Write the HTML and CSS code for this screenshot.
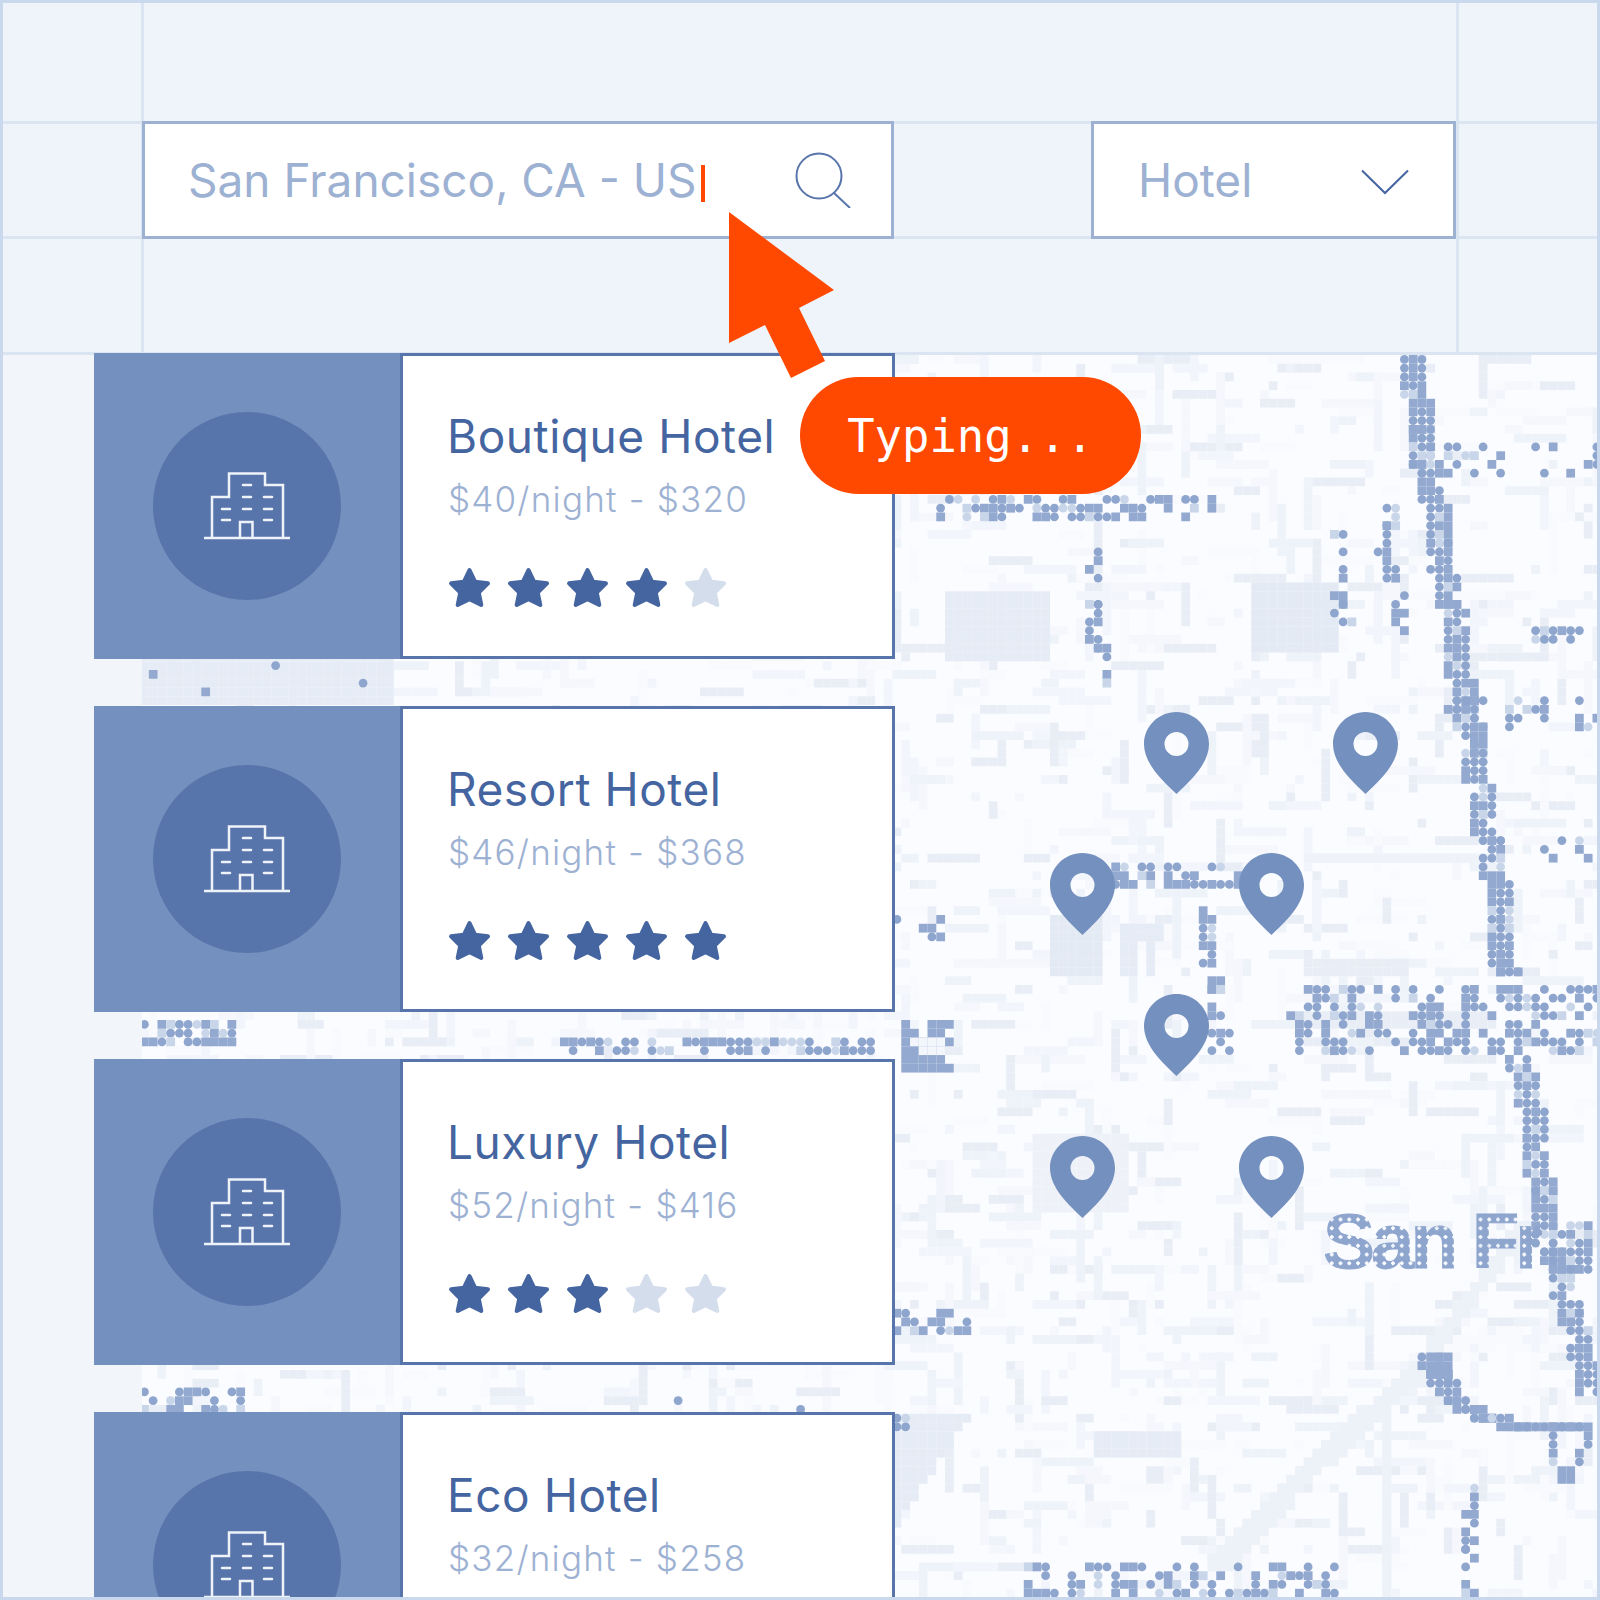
FILE: index.html
```html
<!DOCTYPE html>
<html lang="en">
<head>
  <meta charset="UTF-8" />
  <title>Hotel search</title>
  <link rel="stylesheet" href="styles.css">
</head>
<body>
  <svg class="defs" width="0" height="0">
    <symbol id="star" viewBox="0 0 42 40">
      <path d="M21 3 L26.5 14.5 L39 16 L30 25 L32.5 37 L21 31.5 L9.5 37 L12 25 L3 16 L15.5 14.5 Z" fill="currentColor" stroke="currentColor" stroke-width="4" stroke-linejoin="round" />
    </symbol>
    <symbol id="building" viewBox="0 0 86 68">
      <g fill="none" stroke="#eef2f9" stroke-width="2.5">
        <path d="M0 66 H86" />
        <path d="M8 66 V25 H25 V1.5 H61 V13 H79 V66" />
        <path d="M36 66 V50 H48.5 V66" />
        <path stroke-linecap="round" d="M39 13 H47 M39 25 H47 M60 25 H68 M18 37 H26 M39 37 H47 M60 37 H68 M18 48 H26 M60 48 H68" />
      </g>
    </symbol>
  </svg>

  <div class="frame">
    <header class="toolbar">
      <div class="search">
        <span class="search-text">San Francisco, CA - US<i class="caret"></i></span>
        <svg class="search-icon" viewBox="0 0 56 56" width="56" height="56">
          <circle cx="24" cy="24" r="22.5" fill="none" stroke="#5875ab" stroke-width="2" />
          <path d="M39 41 L55 56" fill="none" stroke="#5875ab" stroke-width="2" />
        </svg>
      </div>
      <div class="select">
        <span class="select-text">Hotel</span>
        <svg class="chevron" viewBox="0 0 48 26" width="48" height="26">
          <path d="M1 1.5 L24 24 L47 1.5" fill="none" stroke="#4565a1" stroke-width="2" />
        </svg>
      </div>
    </header>

    <main class="content">
      <div class="map" id="map"></div>
      <div class="map-label">San Fr</div>

      <div class="results">
        <article class="card">
          <div class="thumb"><span class="thumb-circle"><svg class="building"><use href="#building" /></svg></span></div>
          <div class="info">
            <h2 class="name">Boutique Hotel</h2>
            <p class="price">$40/night - $320</p>
            <div class="stars">
              <svg class="star"><use href="#star" /></svg>
              <svg class="star"><use href="#star" /></svg>
              <svg class="star"><use href="#star" /></svg>
              <svg class="star"><use href="#star" /></svg>
              <svg class="star off"><use href="#star" /></svg>
            </div>
          </div>
        </article>

        <article class="card">
          <div class="thumb"><span class="thumb-circle"><svg class="building"><use href="#building" /></svg></span></div>
          <div class="info">
            <h2 class="name">Resort Hotel</h2>
            <p class="price">$46/night - $368</p>
            <div class="stars">
              <svg class="star"><use href="#star" /></svg>
              <svg class="star"><use href="#star" /></svg>
              <svg class="star"><use href="#star" /></svg>
              <svg class="star"><use href="#star" /></svg>
              <svg class="star"><use href="#star" /></svg>
            </div>
          </div>
        </article>

        <article class="card">
          <div class="thumb"><span class="thumb-circle"><svg class="building"><use href="#building" /></svg></span></div>
          <div class="info">
            <h2 class="name">Luxury Hotel</h2>
            <p class="price">$52/night - $416</p>
            <div class="stars">
              <svg class="star"><use href="#star" /></svg>
              <svg class="star"><use href="#star" /></svg>
              <svg class="star"><use href="#star" /></svg>
              <svg class="star off"><use href="#star" /></svg>
              <svg class="star off"><use href="#star" /></svg>
            </div>
          </div>
        </article>

        <article class="card">
          <div class="thumb"><span class="thumb-circle"><svg class="building"><use href="#building" /></svg></span></div>
          <div class="info">
            <h2 class="name">Eco Hotel</h2>
            <p class="price">$32/night - $258</p>
          </div>
        </article>
      </div>
    </main>

    <svg class="pointer" viewBox="0 0 106 167" width="106" height="167">
      <path d="M0 0 L105 78 L70 96 L96 149 L62 166 L36 113 L0 131 Z" fill="#ff4800" />
    </svg>
    <div class="typing">Typing...</div>
  </div>

  <script src="map.js"></script>
</body>
</html>
```

FILE: styles.css
```css
* {
  margin: 0;
  padding: 0;
  box-sizing: border-box;
}
body {
  background: #eff3fa;
  font-family: 'Inter', 'Liberation Sans', sans-serif;
}
.defs {
  position: absolute;
}
.frame {
  position: relative;
  width: 1600px;
  height: 1600px;
  overflow: hidden;
  background: #f2f6fb;
}
.frame::after {
  content: "";
  position: absolute;
  inset: 0;
  border: 3px solid #c9d8ec;
  pointer-events: none;
}

/* Top bar with its guide lines */
.toolbar {
  display: flex;
  align-items: flex-start;
  height: 355px;
  margin-bottom: -2px;
  padding: 121px 0 0 142px;
  background-color: #eff3fa;
  background-image:
    linear-gradient(#dbe4f1, #dbe4f1),
    linear-gradient(#dbe4f1, #dbe4f1),
    linear-gradient(#dbe4f1, #dbe4f1),
    linear-gradient(#dbe4f1, #dbe4f1),
    linear-gradient(#dbe4f1, #dbe4f1);
  background-repeat: no-repeat;
  background-size: 100% 3px, 100% 3px, 100% 3px, 3px 100%, 3px 100%;
  background-position: 0 121px, 0 236px, 0 352px, 141px 0, 1456px 0;
}
.search, .select {
  display: flex;
  align-items: center;
  height: 118px;
  background: #fff;
  border: 3px solid #9db1d3;
}
.search {
  width: 752px;
  padding-left: 43px;
  position: relative;
}
.select {
  width: 365px;
  margin-left: 197px;
  padding-left: 44px;
  position: relative;
}
.search-text, .select-text {
  font-size: 46px;
  font-weight: 400;
  color: #9db1d3;
}
.caret {
  display: inline-block;
  width: 4px;
  height: 37px;
  margin-left: 4px;
  vertical-align: -5px;
  background: #ff4800;
}
.search-icon {
  position: absolute;
  left: 650px;
  top: 28px;
}
.chevron {
  position: absolute;
  left: 267px;
  top: 45px;
}

/* Map behind the result cards */
.content {
  position: relative;
  height: 1247px;
  overflow: hidden;
}
.map {
  position: absolute;
  left: 142px;
  top: 2px;
  right: 0;
  bottom: 0;
  background: #fafcff;
}
.map svg {
  display: block;
}
.map-label {
  position: absolute;
  left: 1323px;
  top: 849px;
  font-family: 'Liberation Sans', sans-serif;
  font-size: 78px;
  font-weight: 700;
  line-height: 1;
  letter-spacing: -4px;
  white-space: nowrap;
  color: #8ea5ce;
  -webkit-text-stroke: 1px #8ea5ce;
  -webkit-mask-image: radial-gradient(circle, #000 72%, transparent 74%);
  -webkit-mask-size: 8.75px 8.75px;
  mask-image: radial-gradient(circle, #000 72%, transparent 74%);
  mask-size: 8.75px 8.75px;
}

/* Result list */
.results {
  position: relative;
  display: flex;
  flex-direction: column;
  gap: 47px;
  width: 895px;
  padding-left: 94px;
}
.card {
  display: flex;
  flex: none;
  height: 306px;
}
.thumb {
  display: flex;
  align-items: center;
  justify-content: center;
  width: 306px;
  background: #7490bf;
}
.thumb-circle {
  display: flex;
  align-items: center;
  justify-content: center;
  width: 188px;
  height: 188px;
  border-radius: 50%;
  background: #5875ab;
}
.building {
  width: 86px;
  height: 68px;
}
.info {
  flex: 1;
  padding: 54px 0 0 44px;
  background: #fff;
  border: 3px solid #5875ab;
}
.name {
  font-size: 46px;
  font-weight: 400;
  line-height: 53px;
  letter-spacing: 0.55px;
  color: #4565a1;
}
.price {
  margin: 14px 0 0 1px;
  font-size: 35px;
  font-weight: 300;
  line-height: 44px;
  letter-spacing: 1.2px;
  color: #9db1d3;
}
.stars {
  display: flex;
  gap: 16px;
  margin: 46px 0 0 1px;
}
.star {
  width: 43px;
  height: 41px;
  color: #4565a1;
}
.star.off {
  color: #d3ddec;
}

/* Pointer and tooltip sit over everything */
.pointer {
  position: absolute;
  left: 729px;
  top: 212px;
}
.typing {
  position: absolute;
  left: 800px;
  top: 377px;
  width: 341px;
  height: 117px;
  border-radius: 59px;
  background: #ff4800;
  color: #fff;
  font-family: 'DejaVu Sans Mono', monospace;
  font-size: 45.5px;
  line-height: 119px;
  text-align: center;
}
```

FILE: map.js
```js
// Pixelated street map, drawn in page coordinates
const P = 8.75;
const TOP = 355;
const W = 1600;
const H = 1600;

let seed = 7;
function rnd() {
  seed = (seed * 16807) % 2147483647;
  return seed / 2147483647;
}

const out = [];

function cell(x, y, color, round) {
  const cx = Math.floor(x / P) * P;
  const cy = Math.floor((y - TOP) / P) * P + TOP;
  if (round) {
    out.push(`<circle cx="${(cx + P / 2).toFixed(1)}" cy="${(cy + P / 2).toFixed(1)}" r="4.4" fill="${color}"/>`);
  } else {
    out.push(`<rect x="${cx.toFixed(1)}" y="${cy.toFixed(1)}" width="${P}" height="${P}" fill="${color}"/>`);
  }
}

// a box of light cells
function block(x0, y0, x1, y1, color, density) {
  for (let y = y0; y < y1; y += P) {
    for (let x = x0; x < x1; x += P) {
      if (rnd() < (density || 1)) cell(x, y, color, false);
    }
  }
}

// dark square/round cells, with paler ones mixed in
function dark(x, y) {
  const r = rnd();
  if (r < 0.17) cell(x, y, '#c9d6e9', rnd() < 0.5);
  else if (r < 0.6) cell(x, y, '#8ea5ce', true);
  else cell(x, y, '#93a9d0', false);
}

function strip(x0, y0, x1, y1, density) {
  for (let y = y0; y < y1; y += P) {
    for (let x = x0; x < x1; x += P) {
      if (rnd() < density) dark(x, y);
    }
  }
}

function road(points, width, density) {
  for (let i = 0; i < points.length - 1; i++) {
    const [ax, ay] = points[i];
    const [bx, by] = points[i + 1];
    const steps = Math.ceil(Math.hypot(bx - ax, by - ay) / (P / 2));
    for (let s = 0; s < steps; s += 2) {
      const x = ax + (bx - ax) * s / steps;
      const y = ay + (by - ay) * s / steps;
      for (let k = 0; k < width; k++) {
        if (rnd() < density) dark(x + k * P - (width * P) / 2 + 6, y);
      }
    }
  }
}

function paleRoad(points, width, color) {
  for (let i = 0; i < points.length - 1; i++) {
    const [ax, ay] = points[i];
    const [bx, by] = points[i + 1];
    const steps = Math.ceil(Math.hypot(bx - ax, by - ay) / (P / 2));
    for (let s = 0; s < steps; s++) {
      const x = ax + (bx - ax) * s / steps;
      const y = ay + (by - ay) * s / steps;
      for (let k = 0; k < width; k++) cell(x + k * P, y, color, false);
    }
  }
}

// background noise: short pale streets
const pales = ['#f8fafd', '#f5f7fc', '#f2f5fb', '#eef2f9', '#e9eef6'];
for (let i = 0; i < 2600; i++) {
  const x = 142 + rnd() * (W - 142);
  const y = TOP + rnd() * (H - TOP);
  const len = 1 + Math.floor(rnd() * 6);
  const across = rnd() < 0.6;
  const color = pales[Math.floor(rnd() * pales.length)];
  for (let k = 0; k < len; k++) {
    cell(across ? x + k * P : x, across ? y : y + k * P, color, false);
  }
}

// pale city blocks
block(142, 660, 395, 706, '#e6ecf5');
strip(142, 662, 390, 706, 0.03);
block(949, 593, 1048, 663, '#e6ecf5');
block(1252, 583, 1334, 653, '#e3eaf4');
block(1051, 920, 1103, 973, '#e3eaf4');
block(1121, 930, 1130, 980, '#e6ecf5');
block(1150, 930, 1157, 980, '#e6ecf5');
block(1121, 925, 1157, 934, '#e6ecf5');
block(1307, 967, 1411, 983, '#e9eef6');
block(1094, 1433, 1180, 1457, '#e6ecf5');
block(1040, 1140, 1130, 1215, '#eef2f8');
block(1300, 1017, 1500, 1030, '#e9eef6');
for (let i = 0; i < 14; i++) {
  block(890, 1417 + i * P, 972 - i * 6, 1417 + (i + 1) * P, '#e6ecf5');
}
paleRoad([[1420, 1363], [1300, 1470], [1207, 1567]], 3, '#edf1f8');
paleRoad([[1385, 1420], [1385, 1595]], 1, '#edf1f8');
paleRoad([[1520, 1225], [1420, 1360]], 2, '#edf1f8');
paleRoad([[1310, 860], [1490, 860]], 2, '#eff3f9');

// main roads
road([[1408, 359], [1420, 417], [1418, 450], [1429, 483], [1438, 523], [1442, 567], [1452, 617], [1458, 667], [1465, 703], [1474, 770], [1483, 803], [1488, 853], [1495, 887], [1499, 920], [1501, 953], [1508, 983]], 3, 0.95);
road([[1517, 1063], [1529, 1103], [1533, 1137], [1538, 1170], [1542, 1223], [1558, 1277], [1570, 1313], [1583, 1363], [1590, 1397]], 3, 0.95);
road([[1427, 1357], [1440, 1380], [1457, 1403], [1483, 1417], [1517, 1427], [1550, 1427], [1585, 1430]], 3, 0.95);
block(1427, 1355, 1445, 1375, '#93a9d0');
road([[1554, 1437], [1556, 1465]], 1, 1);
road([[1584, 1437], [1579, 1465]], 1, 1);
block(1566, 1470, 1583, 1479, '#93a9d0');

// side streets and street names
strip(940, 497, 1216, 523, 0.55);
road([[1095, 550], [1095, 600], [1090, 625], [1100, 650], [1112, 688]], 2, 0.55);
road([[1330, 515], [1340, 545], [1335, 600], [1345, 628]], 2, 0.4);
road([[1392, 497], [1385, 550], [1395, 590], [1400, 637]], 2, 0.55);
strip(1411, 450, 1596, 478, 0.35);
strip(1538, 630, 1587, 647, 0.85);
strip(1447, 700, 1596, 727, 0.35);
strip(1465, 727, 1501, 770, 0.3);
strip(1112, 867, 1239, 885, 0.65);
road([[1205, 913], [1210, 960], [1212, 1027]], 2, 0.8);
strip(1216, 1037, 1234, 1062, 0.75);
strip(1288, 990, 1596, 1017, 0.55);
strip(1298, 1027, 1596, 1060, 0.55);
block(906, 1027, 958, 1078, '#93a9d0', 0.85);
block(924, 1045, 942, 1060, '#f3f6fb');
strip(890, 922, 951, 947, 0.4);
strip(1547, 842, 1596, 867, 0.5);
strip(899, 1310, 971, 1335, 0.45);
strip(1553, 1225, 1596, 1273, 0.8);
road([[1465, 1485], [1465, 1520], [1470, 1600]], 2, 0.6);
strip(1024, 1565, 1347, 1598, 0.5);
strip(899, 1417, 908, 1430, 1);
strip(140, 1025, 228, 1043, 0.8);
strip(565, 1045, 874, 1059, 0.7);
strip(140, 1388, 240, 1412, 0.55);
strip(640, 1402, 870, 1412, 0.04);

// hotel pins
const pins = [[1144, 712], [1333, 712], [1050, 853], [1239, 853], [1144, 994], [1050, 1136], [1239, 1136]];
pins.forEach(([x, y]) => {
  out.push(`<path transform="translate(${x} ${y})" fill="#7490bf" fill-rule="evenodd" d="M32.5 0 C50.5 0 65 14.5 65 32 C65 52 46 69 32.5 82 C19 69 0 52 0 32 C0 14.5 14.5 0 32.5 0 Z M32.5 20 A12 12 0 1 0 32.5 44 A12 12 0 1 0 32.5 20 Z"/>`);
});

document.getElementById('map').innerHTML =
  `<svg width="${W - 142}" height="${H - TOP}" viewBox="142 ${TOP} ${W - 142} ${H - TOP}">${out.join('')}</svg>`;
```
